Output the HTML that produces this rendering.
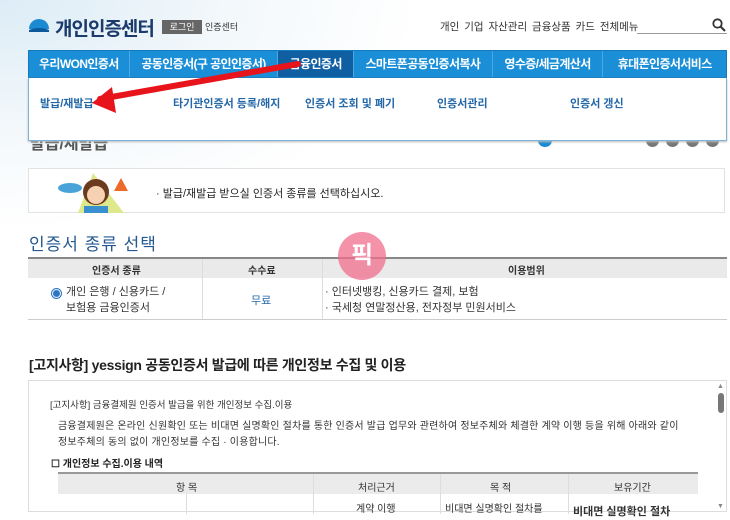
<!DOCTYPE html>
<html><head><meta charset="utf-8"><style>
*{margin:0;padding:0;box-sizing:border-box}
body{width:730px;height:520px;overflow:hidden;background:#fff;font-family:"Liberation Sans","Noto Sans CJK KR",sans-serif;position:relative;color:#333}
.abs{position:absolute}
.bgdots{left:0;top:0;width:730px;height:260px;background:radial-gradient(ellipse 420px 230px at 0 0,#dcecf6 0,#f3f8fb 55%,#fff 100%)}
.nav{left:28px;top:50px;width:699px;height:28px;background:#1a8fd8;display:flex;border:1px solid #137bbd}
.nav div{color:#fff;font-size:12px;font-weight:bold;text-align:center;line-height:27px;border-right:1px solid #4aa8e4;letter-spacing:-0.6px;white-space:nowrap;overflow:hidden}
.nav .on{background:#115fa3}
.drop{left:28px;top:78px;width:699px;height:63px;background:#fff;border:1px solid #7ab4dc;border-top:none;box-shadow:0 1px 2px #bbb}
.sub{top:95px;font-size:11px;font-weight:bold;color:#2568a8}
.dot{top:134px;width:13px;height:13px;border-radius:50%;background:#777}
</style></head><body>
<div class="abs bgdots"></div>
<svg class="abs" style="left:28px;top:17px" width="22" height="16"><path d="M1 12 A10 10 0 0 1 21 12 Z" fill="#1a8ad2"/><path d="M1 13 Q11 9 21 13 L21 15 L1 15Z" fill="#0c5a9a"/></svg>
<div class="abs" style="left:55px;top:14px;font-size:19px;font-weight:bold;color:#1a3b6b;letter-spacing:-1px">개인인증센터</div>
<div class="abs" style="left:162px;top:20px;width:40px;height:14px;background:#666;color:#fff;font-size:9px;text-align:center;line-height:14px">로그인</div>
<div class="abs" style="left:205px;top:20px;font-size:9px;color:#333">인증센터</div>
<div class="abs" style="left:440px;top:19px;font-size:10.5px;color:#333;word-spacing:2px">개인 기업 자산관리 금융상품 카드 전체메뉴</div>
<div class="abs" style="left:637px;top:33px;width:90px;border-top:1px solid #999"></div>
<svg class="abs" style="left:712px;top:18px" width="14" height="14"><circle cx="5.5" cy="5.5" r="4.2" stroke="#333" stroke-width="1.8" fill="none"/><path d="M8.5 8.5 L13 13" stroke="#333" stroke-width="2"/></svg>
<div class="abs" style="left:30px;top:130px;font-size:16px;font-weight:bold;color:#555">발급/재발급</div>
<div class="abs" style="left:538px;top:134px;width:14px;height:13px;border-radius:50%;background:#1a8ad2"></div>
<div class="abs dot" style="left:646px"></div><div class="abs dot" style="left:666px"></div><div class="abs dot" style="left:686px"></div><div class="abs dot" style="left:706px"></div>
<div class="abs nav">
<div style="width:101px">우리WON인증서</div><div style="width:149px">공동인증서(구 공인인증서)</div><div class="on" style="width:76px">금융인증서</div><div style="width:139px">스마트폰공동인증서복사</div><div style="width:111px">영수증/세금계산서</div><div style="width:123px;border:none">휴대폰인증서서비스</div>
</div>
<div class="abs drop"></div>
<div class="abs sub" style="left:40px">발급/재발급</div>
<div class="abs sub" style="left:173px">타기관인증서 등록/해지</div>
<div class="abs sub" style="left:305px">인증서 조회 및 폐기</div>
<div class="abs sub" style="left:437px">인증서관리</div>
<div class="abs sub" style="left:570px">인증서 갱신</div>
<svg class="abs" style="left:0;top:0" width="730" height="140"><path d="M298 64 L100 99" stroke="#e8141b" stroke-width="6" stroke-linecap="round"/><path d="M92 103 L112 87 L116 113Z" fill="#e8141b"/></svg>
<div class="abs" style="left:28px;top:168px;width:697px;height:45px;border:1px solid #e2e2e2;background:#fff"></div>
<svg class="abs" style="left:58px;top:168px" width="76" height="45"><path d="M20 45 L35 5 L66 45Z" fill="#dfe88a"/><ellipse cx="12" cy="20" rx="12" ry="5" fill="#4aa3d8"/><path d="M56 23 L63 10 L70 23Z" fill="#ee6a2b"/><circle cx="38" cy="24" r="13" fill="#6b3a1f"/><circle cx="38" cy="27" r="9" fill="#f6d2b3"/><rect x="26" y="38" width="24" height="7" fill="#3a8fcf"/></svg>
<div class="abs" style="left:156px;top:185px;font-size:11px;color:#222">· 발급/재발급 받으실 인증서 종류를 선택하십시오.</div>
<div class="abs" style="left:29px;top:230px;font-size:17px;color:#25598f;letter-spacing:1px">인증서 종류 선택</div>
<div class="abs" style="left:28px;top:257px;width:699px;height:2px;background:#888"></div>
<div class="abs" style="left:28px;top:259px;width:699px;height:19px;background:#eaeaea"></div>
<div class="abs" style="left:28px;top:319px;width:699px;border-top:1px solid #ccc"></div>
<div class="abs" style="left:202px;top:259px;height:60px;border-left:1px solid #ddd"></div>
<div class="abs" style="left:322px;top:259px;height:60px;border-left:1px solid #ddd"></div>
<div class="abs" style="left:92px;top:262px;font-size:10px;font-weight:bold">인증서 종류</div>
<div class="abs" style="left:248px;top:262px;font-size:10px;font-weight:bold">수수료</div>
<div class="abs" style="left:508px;top:262px;font-size:10px;font-weight:bold">이용범위</div>
<div class="abs" style="left:51px;top:288px;width:11px;height:11px;border:1px solid #2b74c0;border-radius:50%;background:radial-gradient(circle,#2b74c0 3px,#fff 4px)"></div>
<div class="abs" style="left:66px;top:284px;font-size:11px;line-height:16px;color:#333">개인 은행 / 신용카드 /<br>보험용 금융인증서</div>
<div class="abs" style="left:251px;top:292px;font-size:11px;color:#2568a8">무료</div>
<div class="abs" style="left:325px;top:284px;font-size:11px;line-height:16px;color:#333">· 인터넷뱅킹, 신용카드 결제, 보험<br>· 국세청 연말정산용, 전자정부 민원서비스</div>
<div class="abs" style="left:338px;top:232px;width:48px;height:48px;border-radius:50%;background:rgba(240,110,140,.75);color:#fff;font-size:24px;font-weight:bold;text-align:center;line-height:48px">픽</div>
<div class="abs" style="left:29px;top:355px;font-size:14px;font-weight:bold;color:#222;letter-spacing:-0.3px">[고지사항] yessign 공동인증서 발급에 따른 개인정보 수집 및 이용</div>
<div class="abs" style="left:28px;top:380px;width:699px;height:132px;border:1px solid #ddd"></div>
<div class="abs" style="left:717px;top:383px;font-size:7px;color:#888">▲</div>
<div class="abs" style="left:718px;top:393px;width:6px;height:20px;border-radius:3px;background:#777"></div>
<div class="abs" style="left:717px;top:503px;font-size:7px;color:#888">▼</div>
<div class="abs" style="left:50px;top:397px;font-size:9.5px;color:#333">[고지사항] 금융결제원 인증서 발급을 위한 개인정보 수집.이용</div>
<div class="abs" style="left:58px;top:419px;width:632px;font-size:10px;line-height:16px;color:#333;letter-spacing:0.2px">금융결제원은 온라인 신원확인 또는 비대면 실명확인 절차를 통한 인증서 발급 업무와 관련하여 정보주체와 체결한 계약 이행 등을 위해 아래와 같이 정보주체의 동의 없이 개인정보를 수집 · 이용합니다.</div>
<div class="abs" style="left:51px;top:455px;font-size:10px;font-weight:bold;color:#222">☐ 개인정보 수집.이용 내역</div>
<div class="abs" style="left:58px;top:472px;width:640px;height:2px;background:#999"></div>
<div class="abs" style="left:58px;top:474px;width:640px;height:20px;background:#ebebeb"></div>
<div class="abs" style="left:313px;top:474px;height:40px;border-left:1px solid #ddd"></div>
<div class="abs" style="left:440px;top:474px;height:40px;border-left:1px solid #ddd"></div>
<div class="abs" style="left:568px;top:474px;height:40px;border-left:1px solid #ddd"></div>
<div class="abs" style="left:186px;top:494px;height:20px;border-left:1px solid #ddd"></div>
<div class="abs" style="left:176px;top:479px;font-size:10px">항 목</div>
<div class="abs" style="left:358px;top:479px;font-size:10px">처리근거</div>
<div class="abs" style="left:490px;top:479px;font-size:10px">목 적</div>
<div class="abs" style="left:614px;top:479px;font-size:10px">보유기간</div>
<div class="abs" style="left:356px;top:500px;font-size:10px">계약 이행</div>
<div class="abs" style="left:445px;top:500px;font-size:10px">비대면 실명확인 절차를</div>
<div class="abs" style="left:573px;top:503px;font-size:11px;font-weight:bold">비대면 실명확인 절차</div>
</body></html>
